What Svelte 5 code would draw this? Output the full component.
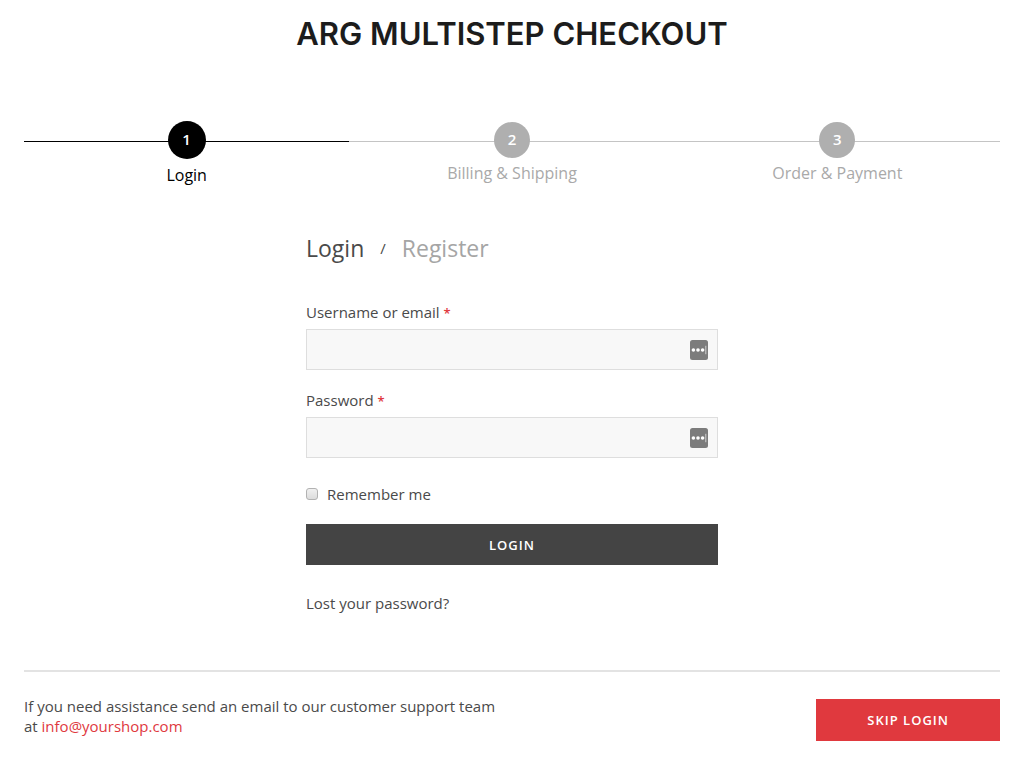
<script>
  const steps = ['Login', 'Billing & Shipping', 'Order & Payment'];
  const current = 0;

  let username = $state('');
  let password = $state('');
  let remember = $state(false);
</script>

{#snippet keyIcon()}
  <svg class="manager" width="18" height="20" viewBox="0 0 18 20" aria-hidden="true">
    <rect width="18" height="20" rx="2.5" fill="#7c7c7c" />
    <circle cx="3.4" cy="10" r="1.8" fill="#fff" />
    <circle cx="8" cy="10" r="1.8" fill="#fff" />
    <circle cx="12.6" cy="10" r="1.8" fill="#fff" />
    <rect x="15.3" y="5.8" width="1" height="8.4" fill="#d0d0d0" />
  </svg>
{/snippet}

<main>
  <h1>ARG MULTISTEP CHECKOUT</h1>

  <ol class="steps">
    {#each steps as step, i}
      <li class:active={i === current} aria-current={i === current ? 'step' : undefined}>
        <span class="number">{i + 1}</span>
        <span class="label">{step}</span>
      </li>
    {/each}
  </ol>

  <form onsubmit={(e) => e.preventDefault()}>
    <nav class="tabs">
      <a class="selected" href="#login">Login</a>
      <span>/</span>
      <a href="#register">Register</a>
    </nav>

    <div class="field">
      <label for="username">Username or email <b>*</b></label>
      <div class="box">
        <input id="username" type="text" bind:value={username} />
        {@render keyIcon()}
      </div>
    </div>

    <div class="field">
      <label for="password">Password <b>*</b></label>
      <div class="box">
        <input id="password" type="password" bind:value={password} />
        {@render keyIcon()}
      </div>
    </div>

    <div class="remember">
      <input id="remember" type="checkbox" bind:checked={remember} />
      <label for="remember">Remember me</label>
    </div>

    <button class="submit" type="submit">LOGIN</button>
    <a class="lost" href="#lost">Lost your password?</a>
  </form>

  <footer>
    <p>
      If you need assistance send an email to our customer support team<br />
      at <a href="mailto:info@yourshop.com">info@yourshop.com</a>
    </p>
    <button class="skip" type="button">SKIP LOGIN</button>
  </footer>
</main>

<style>
  :global(body) {
    background: #fff;
  }

  main {
    padding: 14px 24px 20px;
    font-family: 'Open Sans', sans-serif;
    font-size: 15px;
    line-height: 20px;
    color: #4a4a4a;
  }

  h1 {
    margin: 0;
    font-family: Inter, sans-serif;
    font-size: 31px;
    font-weight: 600;
    line-height: 40px;
    text-align: center;
    color: #1c1c1c;
  }

  .steps {
    display: flex;
    margin: 66px 0 0;
    padding: 0;
    list-style: none;
  }

  li {
    flex: 1;
    display: grid;
    grid-template-rows: 40px auto;
    row-gap: 3px;
    justify-items: center;
    align-items: start;
    font-size: 16px;
    color: #a9a9a9;
  }

  li::before {
    content: '';
    grid-area: 1 / 1;
    align-self: center;
    width: 100%;
    height: 1px;
    margin-top: 3px;
    background: #c4c4c4;
  }

  .number {
    grid-area: 1 / 1;
    align-self: center;
    z-index: 1;
    width: 36px;
    height: 36px;
    border-radius: 50%;
    font-size: 15px;
    font-weight: 600;
    line-height: 35px;
    text-align: center;
    background: #afafaf;
    color: #fff;
  }

  li.active {
    row-gap: 5px;
    color: #000;
  }

  li.active::before {
    background: #000;
  }

  li.active .number {
    width: 38px;
    height: 38px;
    line-height: 37px;
    background: #000;
  }

  form {
    max-width: 412px;
    margin: 48px auto 0;
  }

  .tabs {
    display: flex;
    align-items: center;
    gap: 16px;
    margin-bottom: 39px;
    line-height: 30px;
  }

  .tabs a {
    font-size: 23px;
    color: #a5a5a5;
    text-decoration: none;
  }

  .tabs .selected {
    color: #4a4a4a;
  }

  .field {
    margin-bottom: 20px;
  }

  .field label {
    display: block;
    margin-bottom: 6px;
  }

  .field b {
    font-size: 13px;
    font-weight: 600;
    color: #e0393e;
  }

  .box {
    display: flex;
    align-items: center;
    height: 41px;
    padding-right: 9px;
    box-sizing: border-box;
    border: 1px solid #dedede;
    background: #f8f8f8;
  }

  .box input {
    flex: 1;
    min-width: 0;
    height: 100%;
    padding: 0 12px;
    box-sizing: border-box;
    border: 0;
    outline: 0;
    background: transparent;
    font: inherit;
    color: inherit;
  }

  .remember {
    display: flex;
    align-items: center;
    gap: 9px;
    margin: 26px 0 20px;
  }

  .remember input {
    appearance: none;
    width: 12px;
    height: 12px;
    margin: 0;
    border: 1px solid #b2b2b2;
    border-radius: 3px;
    background: linear-gradient(#f0f0f0, #dcdcdc);
  }

  .remember input:checked {
    background: #4a4a4a;
  }

  button {
    padding: 0;
    border: 0;
    font: 600 13px/20px 'Open Sans', sans-serif;
    letter-spacing: 1px;
    color: #fff;
    cursor: pointer;
  }

  .submit {
    width: 100%;
    height: 41px;
    background: #444;
  }

  .lost {
    display: block;
    margin-top: 28px;
    color: inherit;
    text-decoration: none;
  }

  footer {
    display: flex;
    justify-content: space-between;
    align-items: flex-start;
    margin-top: 57px;
    padding-top: 24px;
    border-top: 2px solid #e3e3e3;
  }

  p {
    margin: 0;
  }

  p a {
    color: #e0393e;
    text-decoration: none;
  }

  .skip {
    height: 42px;
    margin-top: 3px;
    padding: 0 51px;
    background: #e0393e;
  }
</style>
